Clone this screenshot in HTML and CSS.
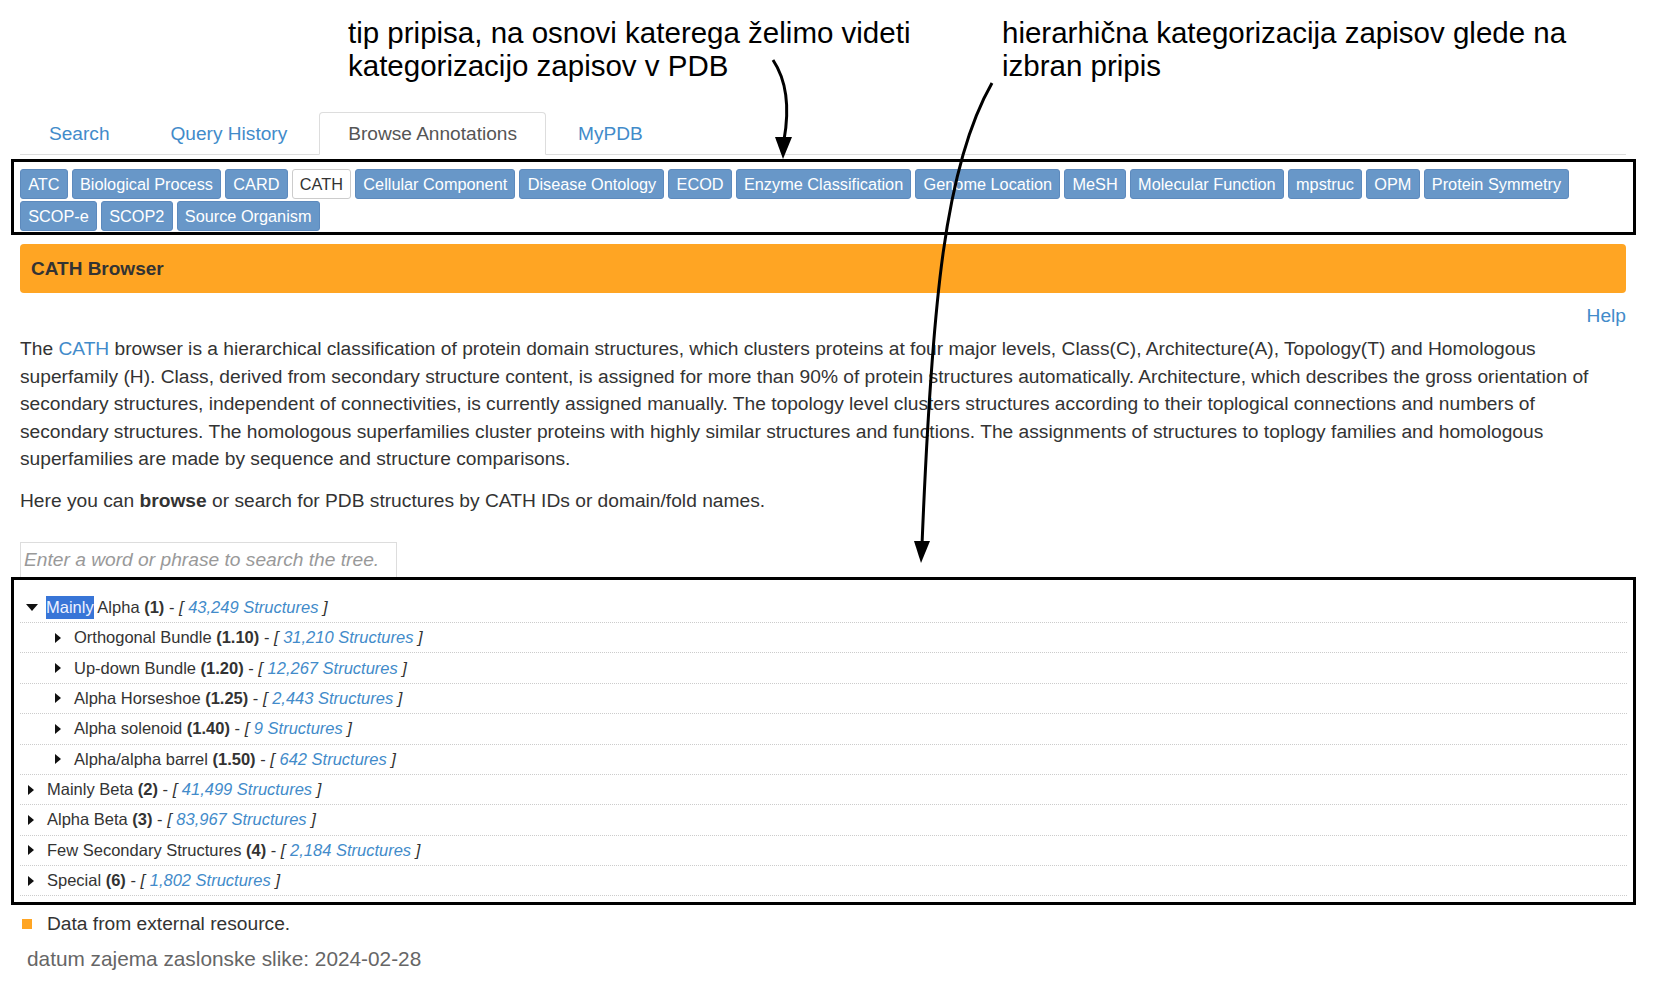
FILE: index.html
```html
<!DOCTYPE html>
<html lang="sl">
<head>
<meta charset="utf-8">
<title>CATH Browser</title>
<link rel="stylesheet" href="styles.css">
</head>
<body>
<div class="page">
  <header class="notes">
    <p class="note note-left">tip pripisa, na osnovi katerega želimo videti<br>kategorizacijo zapisov v PDB</p>
    <p class="note note-right">hierarhična kategorizacija zapisov glede na<br>izbran pripis</p>
  </header>

  <nav class="tabs">
    <a class="tab">Search</a>
    <a class="tab">Query History</a>
    <a class="tab tab-active">Browse Annotations</a>
    <a class="tab">MyPDB</a>
  </nav>

  <div class="mark-box sources">
    <a class="src">ATC</a>
    <a class="src">Biological Process</a>
    <a class="src">CARD</a>
    <a class="src src-active">CATH</a>
    <a class="src">Cellular Component</a>
    <a class="src">Disease Ontology</a>
    <a class="src">ECOD</a>
    <a class="src">Enzyme Classification</a>
    <a class="src">Genome Location</a>
    <a class="src">MeSH</a>
    <a class="src">Molecular Function</a>
    <a class="src">mpstruc</a>
    <a class="src">OPM</a>
    <a class="src">Protein Symmetry</a>
    <a class="src">SCOP-e</a>
    <a class="src">SCOP2</a>
    <a class="src">Source Organism</a>
  </div>

  <div class="panel-heading">CATH Browser</div>
  <div class="help-row"><a class="link">Help</a></div>

  <p class="intro intro-first">The <a class="link">CATH</a> browser is a hierarchical classification of protein domain structures, which clusters proteins at four major levels, Class(C), Architecture(A), Topology(T) and Homologous superfamily (H). Class, derived from secondary structure content, is assigned for more than 90% of protein structures automatically. Architecture, which describes the gross orientation of secondary structures, independent of connectivities, is currently assigned manually. The topology level clusters structures according to their toplogical connections and numbers of secondary structures. The homologous superfamilies cluster proteins with highly similar structures and functions. The assignments of structures to toplogy families and homologous superfamilies are made by sequence and structure comparisons.</p>
  <p class="intro intro-second">Here you can <b>browse</b> or search for PDB structures by CATH IDs or domain/fold names.</p>

  <input class="tree-search" type="text" placeholder="Enter a word or phrase to search the tree.">

  <div class="mark-box tree">
    <div class="row"><span class="caret caret-open"></span><span class="name"><span class="sel">Mainly</span> Alpha <b>(1)</b> - <i>[ <a class="link">43,249 Structures</a> ]</i></span></div>
    <div class="row row-sub"><span class="caret"></span><span class="name">Orthogonal Bundle <b>(1.10)</b> - <i>[ <a class="link">31,210 Structures</a> ]</i></span></div>
    <div class="row row-sub"><span class="caret"></span><span class="name">Up-down Bundle <b>(1.20)</b> - <i>[ <a class="link">12,267 Structures</a> ]</i></span></div>
    <div class="row row-sub"><span class="caret"></span><span class="name">Alpha Horseshoe <b>(1.25)</b> - <i>[ <a class="link">2,443 Structures</a> ]</i></span></div>
    <div class="row row-sub"><span class="caret"></span><span class="name">Alpha solenoid <b>(1.40)</b> - <i>[ <a class="link">9 Structures</a> ]</i></span></div>
    <div class="row row-sub"><span class="caret"></span><span class="name">Alpha/alpha barrel <b>(1.50)</b> - <i>[ <a class="link">642 Structures</a> ]</i></span></div>
    <div class="row"><span class="caret"></span><span class="name">Mainly Beta <b>(2)</b> - <i>[ <a class="link">41,499 Structures</a> ]</i></span></div>
    <div class="row"><span class="caret"></span><span class="name">Alpha Beta <b>(3)</b> - <i>[ <a class="link">83,967 Structures</a> ]</i></span></div>
    <div class="row"><span class="caret"></span><span class="name">Few Secondary Structures <b>(4)</b> - <i>[ <a class="link">2,184 Structures</a> ]</i></span></div>
    <div class="row"><span class="caret"></span><span class="name">Special <b>(6)</b> - <i>[ <a class="link">1,802 Structures</a> ]</i></span></div>
  </div>

  <p class="legend"><span class="legend-sq"></span>Data from external resource.</p>
  <p class="date">datum zajema zaslonske slike: 2024-02-28</p>
</div>

<svg class="arrows" width="1665" height="989" viewBox="0 0 1665 989" aria-hidden="true">
  <path d="M773 60 C789 84 789 112 784 140" fill="none" stroke="#000" stroke-width="3"/>
  <polygon points="775,137 792,137 783,159" fill="#000"/>
  <path d="M992 83 C945 165 932 300 922 545" fill="none" stroke="#000" stroke-width="3"/>
  <polygon points="914,541 930,541 921,563" fill="#000"/>
</svg>
</body>
</html>
```

FILE: styles.css
```css
* { box-sizing: border-box; }

html, body {
  margin: 0;
  padding: 0;
  background: #fff;
}

body {
  font-family: "Liberation Sans", Arial, sans-serif;
  color: #333;
  position: relative;
  min-height: 989px;
}

.page {
  padding: 0 39px 0 20px;
}

/* annotation notes */
.notes {
  display: flex;
  padding: 16px 0 0 328px;
  height: 112px;
}
.note {
  margin: 0;
  font-size: 29.5px;
  line-height: 33px;
  color: #000;
}
.note-left { width: 654px; }

/* tabs */
.tabs {
  display: flex;
  height: 43px;
  border-bottom: 1px solid #ddd;
}
.tab {
  display: block;
  height: 43px;
  margin: 0 3px -1px 0;
  padding: 0 28px;
  border: 1px solid transparent;
  border-radius: 4px 4px 0 0;
  font-size: 19.1px;
  line-height: 41px;
  color: #428bca;
}
.tab-active {
  color: #555;
  background: #fff;
  border-color: #ddd #ddd transparent;
}

/* black outline boxes */
.mark-box {
  border: 3px solid #000;
  margin-left: -9px;
  margin-right: -10px;
}

.sources {
  margin-top: 4px;
  padding: 7px 6px 1px;
  display: flex;
  flex-wrap: wrap;
  gap: 2px 4px;
}
.src {
  display: block;
  height: 30px;
  padding: 0 7.2px;
  border: 1px solid #5d8abd;
  border-radius: 3px;
  background: #6897c8;
  color: #fff;
  font-size: 16.3px;
  line-height: 28px;
}
.src-active {
  background: #fff;
  color: #333;
  border-color: #ccc;
}

/* panel heading */
.panel-heading {
  margin-top: 9px;
  height: 49px;
  padding: 0 11px;
  border-radius: 4px;
  background: #ffa523;
  font-weight: bold;
  font-size: 19px;
  line-height: 50px;
  color: #333;
}

.help-row {
  margin-top: 9px;
  text-align: right;
  font-size: 19.2px;
  line-height: 27px;
}

.link { color: #428bca; }

.intro {
  margin: 0;
  font-size: 19.2px;
  line-height: 27.6px;
}
.intro-first { margin-top: 6px; }
.intro-second { margin-top: 14px; }

.tree-search {
  display: block;
  margin-top: 27px;
  width: 377px;
  height: 35px;
  padding: 0 3px;
  border: 1px solid #ddd;
  border-bottom: none;
  font-family: "Liberation Sans", Arial, sans-serif;
  font-size: 19.2px;
  color: #333;
  outline: none;
}
.tree-search::placeholder {
  color: #999;
  font-style: italic;
}

.tree {
  padding: 13px 6px 6px;
}
.row {
  display: flex;
  align-items: center;
  height: 30.4px;
  border-bottom: 1px dotted #ccc;
  font-size: 16.5px;
  color: #333;
}
.row-sub { padding-left: 27px; }

.caret {
  display: block;
  width: 0;
  height: 0;
  margin: 0 13px 0 8px;
  border-top: 5px solid transparent;
  border-bottom: 5px solid transparent;
  border-left: 6px solid #111;
}
.caret-open {
  margin: 0 8px 0 6px;
  border-left: 6px solid transparent;
  border-right: 6px solid transparent;
  border-top: 7px solid #111;
  border-bottom: 0;
}
.name i { font-style: italic; }
.sel {
  display: inline-block;
  line-height: 23px;
  background: #3875d7;
  color: #eef2ff;
}

.legend {
  margin: 5px 0 0;
  display: flex;
  align-items: center;
  font-size: 19.2px;
  line-height: 27px;
}
.legend-sq {
  display: block;
  width: 10px;
  height: 10px;
  margin: 0 15px 0 2px;
  background: #ffa523;
}

.date {
  margin: 9.5px 0 0 7px;
  font-size: 20.8px;
  line-height: 24px;
  color: #666;
}

.arrows {
  position: absolute;
  left: 0;
  top: 0;
  pointer-events: none;
}
```
